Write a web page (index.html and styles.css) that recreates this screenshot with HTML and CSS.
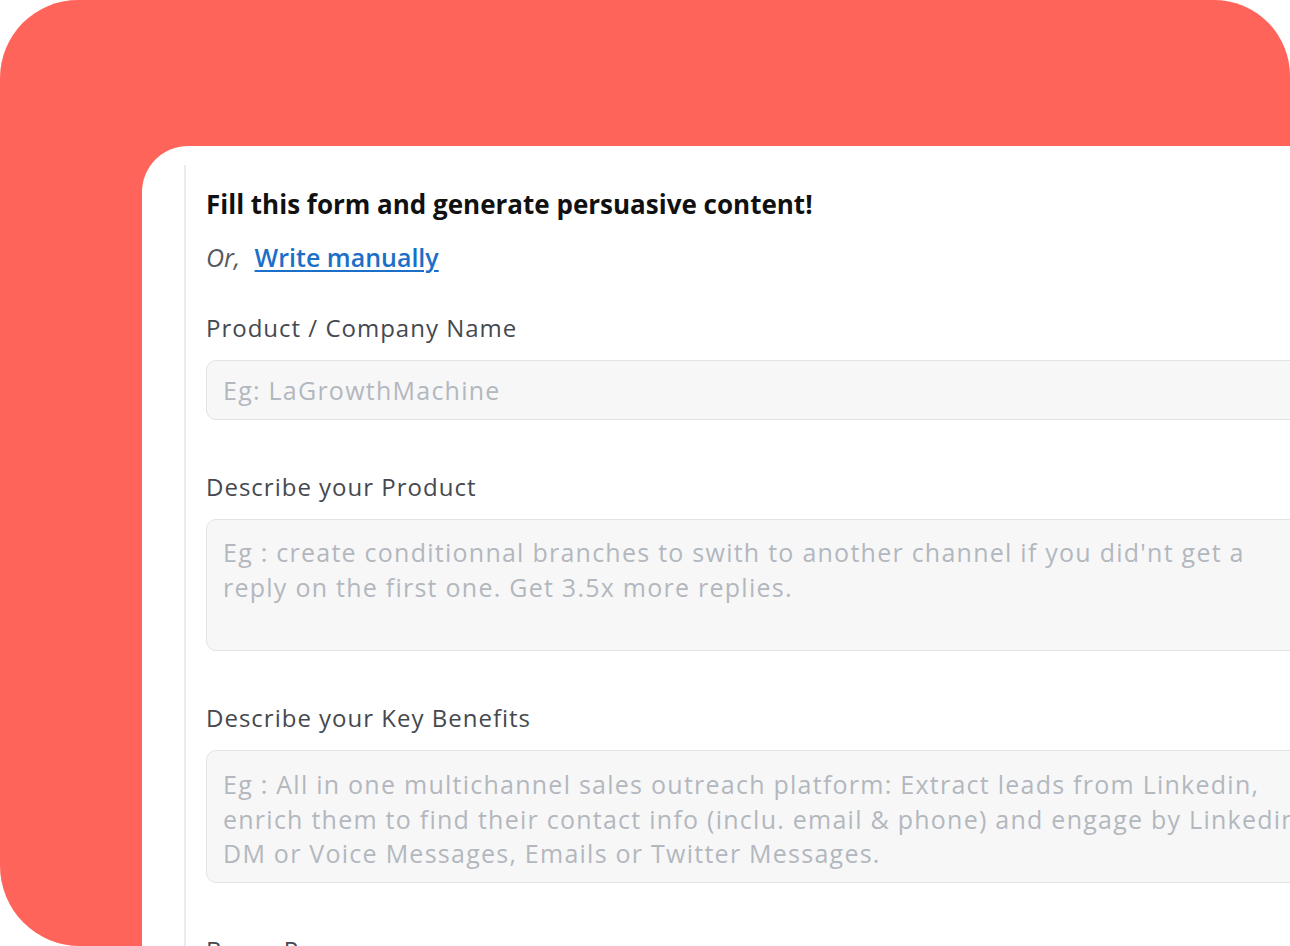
FILE: index.html
```html
<!DOCTYPE html>
<html lang="en">
<head>
<meta charset="utf-8">
<title>Generate content</title>
<link rel="stylesheet" href="styles.css">
</head>
<body>
<div class="frame">
  <div class="card">
    <div class="panel">
      <h1 class="title">Fill this form and generate persuasive content!</h1>
      <p class="alt">Or, <a href="#" class="alt-link">Write manually</a></p>
      <div class="field field-first">
        <label class="label">Product / Company Name</label>
        <div class="input">Eg: LaGrowthMachine</div>
      </div>
      <div class="field">
        <label class="label">Describe your Product</label>
        <div class="input textarea area-product">Eg : create conditionnal branches to swith to another channel if you did'nt get a<br>reply on the first one. Get 3.5x more replies.</div>
      </div>
      <div class="field">
        <label class="label">Describe your Key Benefits</label>
        <div class="input textarea area-benefits">Eg : All in one multichannel sales outreach platform: Extract leads from Linkedin,<br>enrich them to find their contact info (inclu. email &amp; phone) and engage by Linkedin<br>DM or Voice Messages, Emails or Twitter Messages.</div>
      </div>
      <div class="field">
        <label class="label">Buyer Persona</label>
      </div>
    </div>
  </div>
</div>
</body>
</html>
```
FILE: styles.css
```css
html, body {
  margin: 0;
  padding: 0;
  background: #ffffff;
}
body {
  font-family: "Open Sans", "Noto Sans", sans-serif;
  overflow: hidden;
}
.frame {
  width: 1290px;
  height: 946px;
  box-sizing: border-box;
  background: #ff645a;
  border-radius: 78px 76px 0 80px;
  padding: 146px 0 0 142px;
  overflow: hidden;
}
.card {
  background: #ffffff;
  border-top-left-radius: 46px;
  height: 100%;
  box-sizing: border-box;
  padding: 19px 0 0 42px;
  overflow: hidden;
}
.panel {
  border-left: 2px solid #ececf0;
  padding-left: 20px;
  width: 1300px;
  height: 100%;
  box-sizing: border-box;
  display: flex;
  flex-direction: column;
}
.title {
  margin: 23px 0 0;
  font-size: 26px;
  font-weight: 700;
  color: #111111;
  line-height: 32px;
}
.alt {
  margin: 21px 0 0;
  font-size: 25px;
  line-height: 32px;
  color: #555a60;
  font-style: italic;
}
.alt-link {
  font-style: normal;
  color: #1b6fc8;
  font-weight: 600;
  margin-left: 8px;
  text-decoration: underline;
  text-decoration-thickness: 2px;
  text-underline-offset: 3px;
}
.field {
  display: flex;
  flex-direction: column;
  margin-top: 51px;
}
.field-first {
  margin-top: 39px;
}
.label {
  font-size: 24px;
  line-height: 32px;
  letter-spacing: 1px;
  color: #45494f;
  margin-bottom: 16px;
}
.input {
  width: 1200px;
  box-sizing: border-box;
  height: 60px;
  background: #f7f7f8;
  border: 1.5px solid #e2e3e7;
  border-radius: 10px;
  padding: 13px 16px;
  font-size: 25px;
  line-height: 32px;
  letter-spacing: 1.25px;
  color: #b3b7be;
  white-space: nowrap;
}
.textarea {
  height: 132px;
  padding: 15px 16px;
  line-height: 34.5px;
}
.area-benefits {
  height: 133px;
  padding-top: 16px;
}
```
